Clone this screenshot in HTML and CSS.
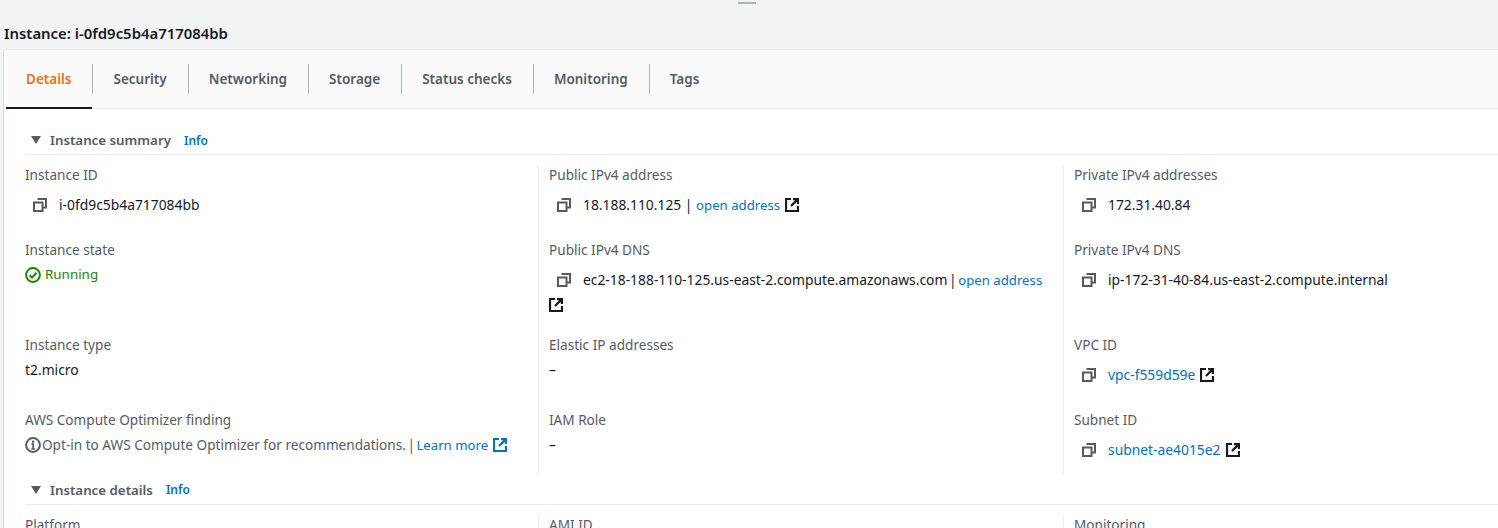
FILE: index.html
```html
<!DOCTYPE html>
<html lang="en">
<head>
  <meta charset="UTF-8">
  <title>Instance details</title>
  <link rel="stylesheet" href="styles.css">
</head>
<body>
  <svg class="defs" width="0" height="0">
    <symbol id="copy" viewBox="0 0 14 14">
      <path d="M4.500 1h8.500v8.500h-3" fill="none" stroke="currentColor" stroke-width="2"/>
      <rect x="1" y="4.500" width="8.500" height="8.500" fill="none" stroke="currentColor" stroke-width="2"/>
    </symbol>
    <symbol id="ext" viewBox="0 0 14 14">
      <path d="M6 1H1v12h12V8" fill="none" stroke="currentColor" stroke-width="2.200"/>
      <path d="M8 1.100h4.900v4.900M12.900 1.100L6 8" fill="none" stroke="currentColor" stroke-width="2.200"/>
    </symbol>
  </svg>

  <div class="handle-bar"><span class="handle"></span></div>
  <h1 class="page-title">Instance: i-0fd9c5b4a717084bb</h1>

  <div class="panel">
    <div class="tabs">
      <a class="tab active">Details</a>
      <a class="tab">Security</a>
      <a class="tab">Networking</a>
      <a class="tab">Storage</a>
      <a class="tab">Status checks</a>
      <a class="tab">Monitoring</a>
      <a class="tab last">Tags</a>
    </div>

    <div class="content">
      <div class="section-head">
        <span class="caret"></span>
        <h2>Instance summary</h2>
        <a class="info">Info</a>
      </div>
      <div class="grid">
        <div class="cell">
          <div class="label">Instance ID</div>
          <div class="value copyable"><svg class="icon copy"><use href="#copy"/></svg><span>i-0fd9c5b4a717084bb</span></div>
        </div>
        <div class="cell">
          <div class="label">Public IPv4 address</div>
          <div class="value copyable"><svg class="icon copy"><use href="#copy"/></svg><span>18.188.110.125 | <a class="link word">open address</a><svg class="icon ext"><use href="#ext"/></svg></span></div>
        </div>
        <div class="cell">
          <div class="label">Private IPv4 addresses</div>
          <div class="value copyable"><svg class="icon copy"><use href="#copy"/></svg><span>172.31.40.84</span></div>
        </div>

        <div class="cell">
          <div class="label">Instance state</div>
          <div class="value running"><svg class="status" viewBox="0 0 16 16"><circle cx="8" cy="8" r="6.900" fill="none" stroke="currentColor" stroke-width="2"/><path d="M4.600 8.200l2.400 2.400 4.400-4.800" fill="none" stroke="currentColor" stroke-width="2"/></svg>Running</div>
        </div>
        <div class="cell">
          <div class="label">Public IPv4 DNS</div>
          <div class="value copyable dns"><svg class="icon copy"><use href="#copy"/></svg>ec2-18-188-110-125.us-east-2.compute.amazonaws.com <span class="sep">|</span> <a class="link word">open address</a><br><svg class="icon ext wrapped"><use href="#ext"/></svg></div>
        </div>
        <div class="cell">
          <div class="label">Private IPv4 DNS</div>
          <div class="value copyable"><svg class="icon copy"><use href="#copy"/></svg><span>ip-172-31-40-84.us-east-2.compute.internal</span></div>
        </div>

        <div class="cell">
          <div class="label">Instance type</div>
          <div class="value">t2.micro</div>
        </div>
        <div class="cell">
          <div class="label">Elastic IP addresses</div>
          <div class="value">–</div>
        </div>
        <div class="cell">
          <div class="label">VPC ID</div>
          <div class="value copyable"><svg class="icon copy"><use href="#copy"/></svg><span><a class="link">vpc-f559d59e</a><svg class="icon ext"><use href="#ext"/></svg></span></div>
        </div>

        <div class="cell end">
          <div class="label">AWS Compute Optimizer finding</div>
          <div class="value muted"><svg class="status tight" viewBox="0 0 16 16"><circle cx="8" cy="8" r="6.900" fill="none" stroke="currentColor" stroke-width="2"/><path d="M6.500 7.200H8.200V12M6.300 12h3.600" fill="none" stroke="currentColor" stroke-width="1.700"/><rect x="7" y="3.600" width="2.200" height="2.200" fill="currentColor"/></svg>Opt-in to AWS Compute Optimizer for recommendations. <span class="sep">|</span> <a class="link word">Learn more</a><svg class="icon ext blue"><use href="#ext"/></svg></div>
        </div>
        <div class="cell end">
          <div class="label">IAM Role</div>
          <div class="value">–</div>
        </div>
        <div class="cell end">
          <div class="label">Subnet ID</div>
          <div class="value copyable"><svg class="icon copy"><use href="#copy"/></svg><span><a class="link">subnet-ae4015e2</a><svg class="icon ext"><use href="#ext"/></svg></span></div>
        </div>
      </div>

      <div class="section-head second">
        <span class="caret"></span>
        <h2>Instance details</h2>
        <a class="info">Info</a>
      </div>
      <div class="grid">
        <div class="cell"><div class="label">Platform</div></div>
        <div class="cell"><div class="label">AMI ID</div></div>
        <div class="cell"><div class="label">Monitoring</div></div>
      </div>
    </div>
  </div>
</body>
</html>
```

FILE: styles.css
```css
html, body {
  margin: 0;
  height: 528px;
  overflow: hidden;
}
body {
  font-family: "Noto Sans", Arial, sans-serif;
  font-size: 14px;
  background: #f2f3f3;
  color: #16191f;
}
.defs { display: block; height: 0; }

.handle-bar {
  height: 18px;
  padding-top: 2px;
  box-sizing: border-box;
  display: flex;
  justify-content: center;
}
.handle {
  width: 18px;
  height: 2px;
  margin-left: -4px;
  background: #aab7b8;
}
.page-title {
  margin: 0;
  padding: 5px 0 0 4px;
  height: 31px;
  box-sizing: border-box;
  font-size: 14.9px;
  line-height: 20px;
  font-weight: 600;
}

.panel {
  margin-left: 3px;
  border-left: 1px solid #d5dbdb;
  border-top: 1px solid #eaeded;
  background: white;
  height: 480px;
}
.tabs {
  display: flex;
  align-items: center;
  height: 58px;
  padding-left: 2px;
  background: #fafafa;
  border-bottom: 1px solid #eaeded;
  position: relative;
}
.tab {
  height: 30px;
  line-height: 30px;
  padding: 0 21px 0 20px;
  border-right: 1px solid #aab7b8;
  font-size: 13.5px;
  font-weight: 600;
  color: #545b64;
}
.tab.last { border-right: none; }
.tab.active { color: #ec7211; }
.tab.active::after {
  content: "";
  position: absolute;
  left: 2px;
  bottom: -1px;
  width: 86px;
  height: 2px;
  background: #16191f;
}

.content { padding-left: 21px; }
.section-head {
  display: flex;
  align-items: center;
  height: 46px;
  padding: 17px 0 0 6px;
  box-sizing: border-box;
  border-bottom: 1px solid #eaeded;
}
.section-head.second {
  height: 30px;
  padding-top: 0;
}
.section-head h2 {
  margin: 0;
  font-size: 13.3px;
  font-weight: 600;
  color: #545b64;
}
.caret {
  width: 0;
  height: 0;
  border-left: 5px solid transparent;
  border-right: 5px solid transparent;
  border-top: 8px solid #545b64;
  margin-right: 9px;
}
.info {
  margin-left: 13px;
  font-size: 12px;
  font-weight: 600;
  color: #0073bb;
}

.grid {
  display: grid;
  grid-template-columns: 513px 525px 525px;
  padding-top: 10px;
}
.cell {
  padding-bottom: 23px;
  border-left: 1px solid #eaeded;
  padding-left: 10px;
}
.cell:nth-child(3n+1) {
  border-left: none;
  padding-left: 0;
}
.cell.end { padding-bottom: 13px; }

.label {
  font-size: 13.6px;
  line-height: 20px;
  color: #545b64;
}
.value {
  font-size: 13.85px;
  line-height: 25px;
  margin-top: 2px;
}
.copyable {
  margin-top: 7px;
  padding-left: 8px;
}
.dns {
  padding-left: 0;
  text-indent: 8px;
  margin-bottom: -5px;
}
.running {
  color: #1d8102;
  font-size: 13.4px;
  display: flex;
  align-items: center;
}
.muted {
  color: #545b64;
  font-size: 13.6px;
}
.sep { margin: 0 -2px; }
.link { color: #0073bb; }
.link.word {
  font-size: 13.2px;
  line-height: 1;
}

.icon {
  display: inline-block;
  width: 14px;
  height: 14px;
  vertical-align: -2px;
}
.copy {
  margin-right: 12px;
  color: #545b64;
}
.ext {
  margin-left: 5px;
  color: #16191f;
}
.ext.blue { color: #0073bb; }
.ext.wrapped { margin-left: 0; }
.status {
  width: 16px;
  height: 16px;
  vertical-align: -3px;
  margin-right: 4px;
  flex: none;
}
.status.tight { margin-right: 1px; }
```
